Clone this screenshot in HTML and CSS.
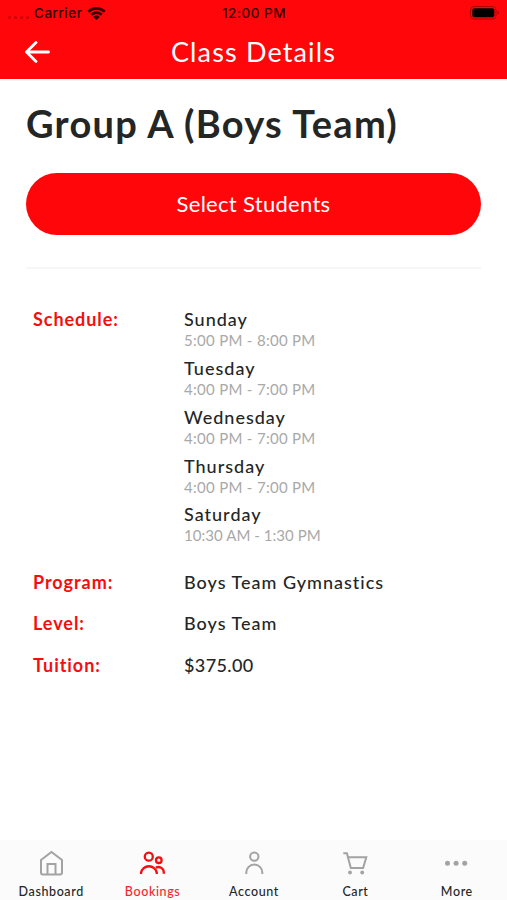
FILE: index.html
```
<!DOCTYPE html>
<html lang="en">
<head>
    <meta charset="UTF-8">
    <meta name="viewport" content="width=device-width, initial-scale=1.0">
    <title>Class Details</title>
    <link rel="stylesheet" href="styles.css">
</head>
<body>
    <div class="screen">
        <!-- Header -->
        <header class="header">
            <div class="status-bar">
                <div class="status-left">
                    <span class="signal"><i></i><i></i><i></i><i></i></span>
                    <span class="carrier">Carrier</span>
                    <svg class="wifi" viewBox="0 0 18 14">
                        <path d="M0.4 4.4a12.2 12.2 0 0 1 17.2 0l-1.7 1.8a9.8 9.8 0 0 0-13.8 0z"/>
                        <path d="M3.2 7.3a8.2 8.2 0 0 1 11.6 0l-1.8 1.8a5.7 5.7 0 0 0-8 0z"/>
                        <path d="M6 10.2a4.2 4.2 0 0 1 6 0l-3 3z"/>
                    </svg>
                </div>
                <span class="clock">12:00 PM</span>
                <svg class="battery" viewBox="0 0 30 14">
                    <rect class="battery-case" x="0.5" y="0.5" width="25.5" height="12.5" rx="3.5"/>
                    <rect x="2.3" y="2.3" width="22" height="9" rx="2"/>
                    <path class="battery-cap" d="M27.5 4.7c2 .7 2 3.4 0 4.1z"/>
                </svg>
            </div>
            <div class="nav-bar">
                <svg class="back" viewBox="0 0 26 22">
                    <path d="M12 1.5L2.5 11l9.5 9.500M3 11H24.500"/>
                </svg>
                <span class="nav-title">Class Details</span>
            </div>
        </header>

        <!-- Class info -->
        <main class="content">
            <h1>Group A (Boys Team)</h1>
            <button class="btn">Select Students</button>

            <dl class="details">
                <div class="row schedule">
                    <dt>Schedule:</dt>
                    <dd>
                        <div class="slot"><div class="day">Sunday</div><div class="time">5:00 PM - 8:00 PM</div></div>
                        <div class="slot"><div class="day">Tuesday</div><div class="time">4:00 PM - 7:00 PM</div></div>
                        <div class="slot"><div class="day">Wednesday</div><div class="time">4:00 PM - 7:00 PM</div></div>
                        <div class="slot"><div class="day">Thursday</div><div class="time">4:00 PM - 7:00 PM</div></div>
                        <div class="slot"><div class="day">Saturday</div><div class="time long">10:30 AM - 1:30 PM</div></div>
                    </dd>
                </div>
                <div class="row">
                    <dt>Program:</dt>
                    <dd>Boys Team Gymnastics</dd>
                </div>
                <div class="row">
                    <dt>Level:</dt>
                    <dd>Boys Team</dd>
                </div>
                <div class="row">
                    <dt>Tuition:</dt>
                    <dd class="price">$375.00</dd>
                </div>
            </dl>
        </main>

        <!-- Tab bar -->
        <nav class="tabs">
            <a class="tab">
                <svg class="icon" viewBox="0 0 26 26">
                    <path d="M3 10L13.5 1.9L24 10V22.5a2 2 0 0 1-2 2H5a2 2 0 0 1-2-2z"/>
                    <path d="M9.500 24.500V14h8v10.500"/>
                </svg>
                <span>Dashboard</span>
            </a>
            <a class="tab active">
                <svg class="icon" viewBox="0 0 26 26">
                    <circle cx="9.8" cy="6.7" r="4"/>
                    <circle cx="19.8" cy="10.2" r="2.8"/>
                    <path d="M2 24v-1a8 8 0 0 1 15.800 0v1"/>
                    <path d="M16.800 17.600c4-1.800 8 1 8 4.600v1.500"/>
                </svg>
                <span>Bookings</span>
            </a>
            <a class="tab">
                <svg class="icon" viewBox="0 0 26 26">
                    <circle cx="13.300" cy="6.600" r="4.200"/>
                    <path d="M5.300 24v-1.500a8 8 0 0 1 16 0v1.500"/>
                </svg>
                <span>Account</span>
            </a>
            <a class="tab">
                <svg class="icon" viewBox="0 0 26 26">
                    <path d="M1.300 3.300h3.600L8.800 18h12.300L24.300 7.200H6"/>
                    <circle class="fill" cx="8" cy="22.500" r="1.900"/>
                    <circle class="fill" cx="20.200" cy="22.500" r="1.900"/>
                </svg>
                <span>Cart</span>
            </a>
            <a class="tab">
                <svg class="icon" viewBox="0 0 26 26">
                    <circle class="fill" cx="4.500" cy="13.300" r="2.500"/>
                    <circle class="fill" cx="13.100" cy="13.300" r="2.500"/>
                    <circle class="fill" cx="21.700" cy="13.300" r="2.500"/>
                </svg>
                <span>More</span>
            </a>
        </nav>
    </div>
</body>
</html>
```
FILE: styles.css
```
* {
    box-sizing: border-box;
}

body {
    margin: 0;
    font-family: Lato, 'Open Sans', sans-serif;
    font-weight: 500;
    color: #242626;
    background: #fff;
}

.screen {
    display: flex;
    flex-direction: column;
    height: 900px;
}

/* Header */
.header {
    height: 79px;
    background: #ff070a;
}

.status-bar {
    display: grid;
    grid-template-columns: 1fr auto 1fr;
    align-items: center;
    height: 26px;
    padding: 0 7px 0 8px;
    font: 500 13.5px/26px Inter, sans-serif;
    letter-spacing: 0.5px;
    color: #350000;
}

.status-left {
    display: flex;
    align-items: center;
}

.signal {
    display: flex;
    gap: 3px;
    width: 26px;
    padding-top: 8px;
}

.signal i {
    width: 3px;
    height: 3px;
    border-radius: 50%;
    background: #c90005;
}

.wifi {
    width: 19px;
    height: 15px;
    margin-left: 5px;
    fill: #350000;
}

.battery {
    justify-self: end;
    width: 30px;
    height: 14px;
    fill: #000;
}

.battery-case {
    fill: none;
    stroke: #b00005;
}

.battery-cap {
    fill: #b00005;
}

.nav-bar {
    display: grid;
    grid-template-columns: 1fr auto 1fr;
    align-items: center;
    height: 51px;
    padding: 0 24px;
}

.back {
    width: 26px;
    height: 22px;
    fill: none;
    stroke: #fff;
    stroke-width: 2.8;
    stroke-linecap: round;
    stroke-linejoin: round;
}

.nav-title {
    font-size: 27px;
    font-weight: 400;
    letter-spacing: 1.15px;
    color: #fff;
}

/* Class info */
.content {
    flex: 1;
    padding: 22px 26px 0;
}

h1 {
    margin: 0 0 27px;
    font-size: 38px;
    line-height: 45px;
    font-weight: 700;
    letter-spacing: 1.25px;
    white-space: nowrap;
}

.btn {
    display: block;
    width: 100%;
    height: 62px;
    padding: 0;
    border: 0;
    border-radius: 31px;
    background: #ff070a;
    color: #fff;
    font: 400 22px/60px Lato, sans-serif;
    letter-spacing: 0.3px;
}

.details {
    margin: 32px 0 0;
    padding: 38.3px 6px 0 7px;
    border-top: 2px solid #f6f6f6;
}

.row {
    display: grid;
    grid-template-columns: 151px 1fr;
    height: 41.5px;
    font-size: 18px;
    line-height: 25px;
    letter-spacing: 1px;
}

.row.schedule {
    height: 262.7px;
}

dt {
    font-weight: 700;
    letter-spacing: 0.95px;
    color: #f50d0f;
}

dd {
    margin: 0;
}

.price {
    letter-spacing: 0.4px;
}

.slot {
    height: 48.8px;
}

.time {
    margin-top: -1px;
    font-size: 15px;
    line-height: 18px;
    font-weight: 400;
    letter-spacing: 0.3px;
    color: #a9a9a9;
}

.time.long {
    letter-spacing: 0.05px;
}

/* Tab bar */
.tabs {
    display: flex;
    height: 60px;
    background: #fbfbfb;
}

.tab {
    flex: 1;
    display: flex;
    flex-direction: column;
    align-items: center;
    padding-top: 10px;
    font-size: 12.5px;
    line-height: 16px;
    letter-spacing: 0.6px;
}

.tab span {
    margin: 8px 0 0 1px;
}

.icon {
    width: 26px;
    height: 26px;
    fill: none;
    stroke: #a3a3a3;
    stroke-width: 2;
}

.icon .fill {
    fill: #a3a3a3;
    stroke: none;
}

.tab.active {
    color: #f5282b;
}

.active .icon {
    stroke: #f50d0f;
    stroke-width: 2.3;
}
```
